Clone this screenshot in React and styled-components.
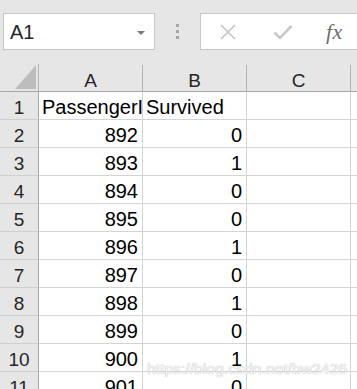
import React from "react";
import styled, { createGlobalStyle } from "styled-components";

const Global = createGlobalStyle`
  html, body { margin: 0; padding: 0; background: #e6e6e6; }
  body { font-family: "Liberation Sans", Arial, sans-serif; }
`;

const Page = styled.div`
  position: relative;
  width: 357px;
  height: 389px;
  overflow: hidden;
  background: #e6e6e6;
`;

const TopBar = styled.div`
  display: flex;
  align-items: flex-start;
  height: 64px;
  padding: 13px 0 0 3px;
  box-sizing: border-box;
  & > * { flex-shrink: 0; }
`;

const NameBox = styled.div`
  width: 152px;
  height: 37px;
  box-sizing: border-box;
  border: 1px solid #c6c6c6;
  background: #fff;
  display: flex;
  align-items: center;
  justify-content: space-between;
  padding: 1px 9px 0 6px;
  font-size: 20px;
  color: #262626;
`;

const DropArrow = styled.span`
  width: 0;
  height: 0;
  border-left: 4px solid transparent;
  border-right: 4px solid transparent;
  border-top: 4px solid #7a7a7a;
  margin-top: 1px;
`;

const Divider = styled.div`
  width: 45px;
  height: 37px;
  display: flex;
  flex-direction: column;
  align-items: center;
  justify-content: center;
  gap: 3px;
`;

const Dot = styled.span`
  width: 3px;
  height: 3px;
  background: #a6a6a6;
`;

const FormulaBox = styled.div`
  width: 180px;
  height: 37px;
  box-sizing: border-box;
  border: 1px solid #c6c6c6;
  background: #fff;
  display: flex;
  align-items: center;
  padding-left: 17px;
`;

const IconSlot = styled.span`
  width: ${(p) => p.$w}px;
  margin-right: ${(p) => p.$gap}px;
  display: flex;
  align-items: center;
  justify-content: center;
`;

const Fx = styled.span`
  font-family: "Liberation Serif", "DejaVu Serif", serif;
  font-style: italic;
  font-size: 22px;
  color: #6e6e6e;
  letter-spacing: 0.5px;
`;

const Grid = styled.div`
  display: grid;
  grid-template-columns: 39px 104px 104px 104px 1fr;
  grid-auto-rows: 28px;
`;

const Cell = styled.div`
  box-sizing: border-box;
  border-right: 1px solid #d4d4d4;
  border-bottom: 1px solid #d4d4d4;
  background: #fff;
  color: #000;
  font-size: 20px;
  line-height: 21px;
  padding: 5px 4px 0 3px;
  text-align: ${(p) => p.$align || "left"};
  white-space: nowrap;
  overflow: hidden;
`;

const ColHead = styled.div`
  box-sizing: border-box;
  background: #e6e6e6;
  border-right: 1px solid #b4b4b4;
  border-bottom: 1px solid #a6a6a6;
  margin-top: ${(p) => (p.$corner ? 0 : 1)}px;
  color: #262626;
  font-size: 19px;
  line-height: 21px;
  padding-top: 5px;
  text-align: center;
  position: relative;
`;

const RowHead = styled.div`
  box-sizing: border-box;
  background: #e6e6e6;
  border-right: 1px solid #a6a6a6;
  border-bottom: 1px solid #cfcfcf;
  color: #262626;
  font-size: 19px;
  line-height: 21px;
  padding-top: 5px;
  text-align: center;
`;

const Corner = styled.svg`
  position: absolute;
  right: 2px;
  bottom: 2px;
`;

const Watermark = styled.div`
  position: absolute;
  left: 147px;
  top: 360px;
  font-size: 15.5px;
  color: rgba(255, 255, 255, 0.92);
  text-shadow: 0 0 1px rgba(140, 140, 140, 0.9);
  letter-spacing: 0.1px;
  white-space: nowrap;
`;

const data = [
  ["PassengerId", "Survived"],
  [892, 0],
  [893, 1],
  [894, 0],
  [895, 0],
  [896, 1],
  [897, 0],
  [898, 1],
  [899, 0],
  [900, 1],
  [901, 0],
];

export default function App() {
  return (
    <Page>
      <Global />
      <TopBar>
        <NameBox>
          <span>A1</span>
          <DropArrow />
        </NameBox>
        <Divider>
          <Dot />
          <Dot />
          <Dot />
        </Divider>
        <FormulaBox>
          <IconSlot $w={20} $gap={35}>
            <svg width="20" height="16" viewBox="0 0 20 16">
              <path d="M3 1 L17 15 M17 1 L3 15" stroke="#c4c4c4" strokeWidth="1.6" fill="none" />
            </svg>
          </IconSlot>
          <IconSlot $w={20} $gap={33}>
            <svg width="20" height="16" viewBox="0 0 20 16">
              <path d="M1.5 8.5 L7 14 L18.5 2" stroke="#c8c8c8" strokeWidth="2.6" fill="none" />
            </svg>
          </IconSlot>
          <Fx>fx</Fx>
        </FormulaBox>
      </TopBar>
      <Grid>
        <ColHead $corner>
          <Corner width="21" height="24" viewBox="0 0 21 24">
            <polygon points="21,0 21,24 0,24" fill="#bdbdbd" />
          </Corner>
        </ColHead>
        <ColHead>A</ColHead>
        <ColHead>B</ColHead>
        <ColHead>C</ColHead>
        <ColHead />
        {data.map((row, i) => (
          <React.Fragment key={i}>
            <RowHead>{i + 1}</RowHead>
            <Cell $align={i === 0 ? "left" : "right"}>{row[0]}</Cell>
            <Cell $align={i === 0 ? "left" : "right"}>{row[1]}</Cell>
            <Cell />
            <Cell />
          </React.Fragment>
        ))}
      </Grid>
      <Watermark>https://blog.csdn.net/bw2426</Watermark>
    </Page>
  );
}
